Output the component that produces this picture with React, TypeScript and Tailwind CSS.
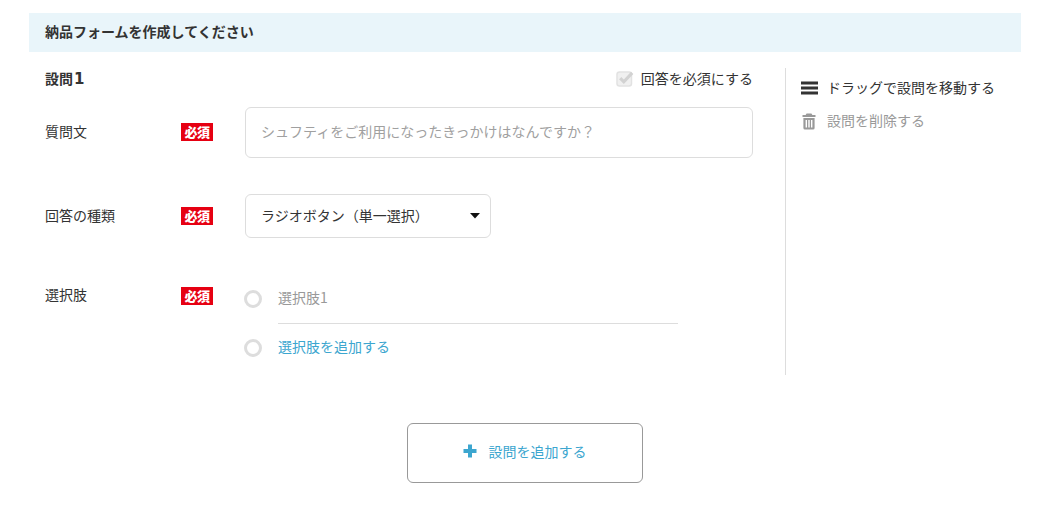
import React from "react";

function Badge() {
  return (
    <span className="flex h-[18px] w-[32px] items-center justify-center bg-[#e60012] pb-px text-[13px] font-black leading-none tracking-[-0.5px] text-white [font-family:'Noto_Sans_CJK_JP',sans-serif]">
      必須
    </span>
  );
}

function Radio() {
  return <span className="block h-[18px] w-[18px] rounded-full border-[3px] border-[#dddddd] bg-white" />;
}

export default function App() {
  return (
    <div className="h-[508px] w-[1052px] overflow-hidden bg-white pl-[29px] pr-[31px] pt-[13px] text-[14px] text-[#333333] [font-family:'Noto_Sans_CJK_JP','Liberation_Sans',sans-serif]">
      <div className="flex h-[39px] items-center bg-[#e9f5fa] pb-[3px] pl-[16px] font-bold leading-none">
        納品フォームを作成してください
      </div>

      <div className="mt-[16px] flex h-[307px]">
        <div className="w-[724px] pl-[16px]">
          <div className="flex h-[22px] items-center justify-between">
            <span className="flex items-baseline font-bold leading-none">
              設問<span className="ml-[1px] text-[15px] [font-family:'DejaVu_Sans',sans-serif]">1</span>
            </span>
            <span className="flex items-center gap-[7px] pb-[2px] leading-none">
              <svg width="18" height="17" viewBox="0 0 18 17">
                <rect x="1" y="2" width="14.5" height="14" rx="2.5" fill="#f0f0f0" stroke="#e2e2e2" strokeWidth="1.5" />
                <path d="M4.2 8.2l3.6 3.6L16.2 2.8" fill="none" stroke="#d2d2d2" strokeWidth="3.2" />
              </svg>
              回答を必須にする
            </span>
          </div>

          <div className="mt-[17px] flex h-[50px] items-center">
            <span className="w-[136px] -translate-y-px leading-none">質問文</span>
            <Badge />
            <div className="ml-[32px] flex h-[51px] flex-1 items-center rounded-[6px] border border-[#dddddd] pb-[2px] pl-[15px] leading-none text-[#a0a0a0]">
              シュフティをご利用になったきっかけはなんですか？
            </div>
          </div>

          <div className="mt-[37px] flex h-[44px] items-center">
            <span className="w-[136px] pb-[2px] leading-none">回答の種類</span>
            <Badge />
            <div className="ml-[32px] flex h-[44px] w-[246px] items-center justify-between rounded-[6px] border border-[#dddddd] pl-[15px] pr-[10px] leading-none">
              <span className="pb-[2px]">ラジオボタン（単一選択）</span>
              <svg width="10" height="6" viewBox="0 0 10 6">
                <path d="M0 0h10L5 5.5z" fill="#111111" />
              </svg>
            </div>
          </div>

          <div className="mt-[47px] flex">
            <span className="w-[136px] pt-[2px] leading-none">選択肢</span>
            <div className="pt-[2px]">
              <Badge />
            </div>
            <div className="ml-[31px] flex flex-col">
              <div className="flex h-[38px] items-start gap-[16px]">
                <div className="pt-[5px]"><Radio /></div>
                <span className="w-[400px] pt-[5px] leading-none text-[#999999]">選択肢1</span>
              </div>
              <div className="ml-[34px] h-px w-[400px] bg-[#dddddd]" />
              <div className="mt-[15px] flex items-center gap-[16px]">
                <Radio />
                <span className="pb-[4px] leading-none text-[#3ca6cf]">選択肢を追加する</span>
              </div>
            </div>
          </div>
        </div>

        <div className="ml-[32px] flex-1 border-l border-[#dddddd] pl-[15px] pt-[12px]">
          <div className="flex h-[16px] items-center gap-[9px] leading-none">
            <svg width="17" height="14" viewBox="0 0 17 14">
              <path d="M0 0.5h17v3H0zM0 5.5h17v3H0zM0 10.5h17v3H0z" fill="#333333" />
            </svg>
            <span className="pb-[2px]">ドラッグで設問を移動する</span>
          </div>
          <div className="mt-[17px] flex h-[16px] items-center gap-[11px] leading-none text-[#999999]">
            <svg width="14" height="17" viewBox="0 0 14 17" className="ml-px">
              <path
                d="M4.6 0.5h4.8l1 1.6H13.5V4H.5V2.1H3.6zM1.4 5H12.6V15a1.6 1.6 0 0 1-1.6 1.6H3A1.6 1.6 0 0 1 1.4 15zM3.6 7v7.4H5V7zM6.3 7v7.4h1.4V7zM9 7v7.4h1.4V7z"
                fill="#999999"
                fillRule="evenodd"
              />
            </svg>
            <span className="pb-[2px]">設問を削除する</span>
          </div>
        </div>
      </div>

      <div className="mt-[48px] flex justify-center pr-[1px]">
        <div className="flex h-[60px] w-[236px] items-center justify-center gap-[12px] rounded-[6px] border border-[#999999] pb-[4px] leading-none text-[#3ca6cf]">
          <svg width="14" height="14" viewBox="0 0 14 14">
            <path d="M5 0.5h4v4.5h4.5v4H9v4.5H5V9H.5V5H5z" fill="#3ca6cf" />
          </svg>
          設問を追加する
        </div>
      </div>
    </div>
  );
}
